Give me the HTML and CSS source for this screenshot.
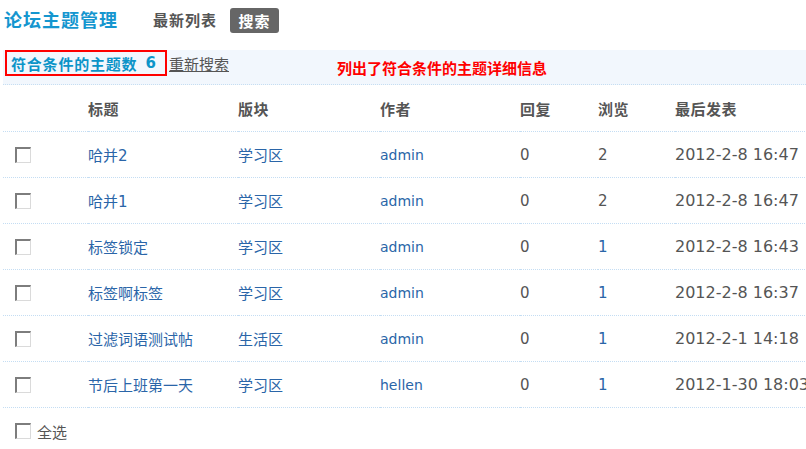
FILE: index.html
```html
<!DOCTYPE html>
<html lang="zh-CN">
<head>
<meta charset="utf-8">
<title>论坛主题管理</title>
<link rel="stylesheet" href="styles.css">
</head>
<body>
<div class="page">
  <div class="topbar">
    <h1 class="title">论坛主题管理</h1>
    <a class="tab">最新列表</a>
    <a class="tab tab-active">搜索</a>
  </div>
  <div class="infobar">
    <div class="count-box">符合条件的主题数 <span class="count-num">6</span></div>
    <a class="research">重新搜索</a>
    <span class="note">列出了符合条件的主题详细信息</span>
  </div>
  <table class="grid">
    <colgroup>
      <col class="c-check"><col class="c-title"><col class="c-board"><col class="c-author"><col class="c-reply"><col class="c-view"><col class="c-last">
    </colgroup>
    <thead>
      <tr><th></th><th>标题</th><th>版块</th><th>作者</th><th>回复</th><th>浏览</th><th>最后发表</th></tr>
    </thead>
    <tbody>
      <tr><td><span class="cb"></span></td><td class="link">哈并2</td><td class="link">学习区</td><td class="link author">admin</td><td class="num">0</td><td class="num">2</td><td class="date">2012-2-8 16:47</td></tr>
      <tr><td><span class="cb"></span></td><td class="link">哈并1</td><td class="link">学习区</td><td class="link author">admin</td><td class="num">0</td><td class="num">2</td><td class="date">2012-2-8 16:47</td></tr>
      <tr><td><span class="cb"></span></td><td class="link">标签锁定</td><td class="link">学习区</td><td class="link author">admin</td><td class="num">0</td><td class="num link">1</td><td class="date">2012-2-8 16:43</td></tr>
      <tr><td><span class="cb"></span></td><td class="link">标签啊标签</td><td class="link">学习区</td><td class="link author">admin</td><td class="num">0</td><td class="num link">1</td><td class="date">2012-2-8 16:37</td></tr>
      <tr><td><span class="cb"></span></td><td class="link">过滤词语测试帖</td><td class="link">生活区</td><td class="link author">admin</td><td class="num">0</td><td class="num link">1</td><td class="date">2012-2-1 14:18</td></tr>
      <tr><td><span class="cb"></span></td><td class="link">节后上班第一天</td><td class="link">学习区</td><td class="link author">hellen</td><td class="num">0</td><td class="num link">1</td><td class="date">2012-1-30 18:03</td></tr>
    </tbody>
  </table>
  <div class="footer">
    <span class="cb"></span><span class="select-all">全选</span>
  </div>
</div>
</body>
</html>
```

FILE: styles.css
```css
html, body {
  margin: 0;
  padding: 0;
  overflow: hidden;
  background: #fff;
}
body {
  font-family: "DejaVu Sans", "Noto Sans CJK SC", sans-serif;
  color: #555;
}
.page {
  width: 806px;
  height: 449px;
  overflow: hidden;
}
.topbar {
  display: flex;
  align-items: center;
  height: 40px;
  padding-left: 4px;
  margin-bottom: 10px;
}
.title {
  margin: 0 35px 0 0;
  font-family: "Noto Sans CJK SC", sans-serif;
  font-size: 18px;
  font-weight: bold;
  letter-spacing: 1px;
  color: #1596cf;
  line-height: 1;
  position: relative;
  top: -1px;
}
.tab {
  font-family: "Noto Sans CJK SC", sans-serif;
  font-size: 15px;
  font-weight: bold;
  letter-spacing: 1px;
  color: #555;
  line-height: 1;
  position: relative;
  top: -1px;
}
.tab-active {
  margin-left: 13px;
  background: #666;
  color: #fff;
  border-radius: 3px;
  height: 25px;
  width: 49px;
  display: flex;
  align-items: center;
  justify-content: center;
  box-sizing: border-box;
  top: 0;
}
.infobar {
  margin-left: 3px;
  height: 34px;
  background: #f2f7fd;
  border-bottom: 1px dotted #c6def2;
  display: flex;
  align-items: flex-start;
  font-family: "Noto Sans CJK SC", sans-serif;
}
.count-box {
  margin-left: 2px;
  height: 26px;
  box-sizing: border-box;
  width: 162px;
  border: 2px solid #f00;
  padding-left: 4px;
  display: flex;
  align-items: center;
  font-size: 15px;
  font-weight: bold;
  letter-spacing: 0.8px;
  color: #0c94c8;
  white-space: pre;
}
.count-num {
  font-family: "DejaVu Sans", sans-serif;
  margin-left: 4px;
}
.research {
  margin-left: 2px;
  height: 26px;
  display: flex;
  align-items: center;
  font-size: 15px;
  color: #555;
  text-decoration: underline;
}
.note {
  margin-left: 108px;
  margin-top: 7px;
  font-size: 15px;
  font-weight: bold;
  color: #f00;
}
.grid {
  margin-left: 3px;
  border-collapse: collapse;
  table-layout: fixed;
  width: 850px;
}
.c-check { width: 85px; }
.c-title { width: 150px; }
.c-board { width: 142px; }
.c-author { width: 140px; }
.c-reply { width: 78px; }
.c-view { width: 77px; }
.c-last { width: 178px; }
.grid th, .grid td {
  height: 45px;
  padding: 0;
  text-align: left;
  vertical-align: middle;
  border-bottom: 1px dotted #c4ddf3;
  white-space: nowrap;
}
.grid th {
  font-size: 15px;
  font-weight: bold;
  color: #555;
  letter-spacing: 0.5px;
  padding-top: 1px;
}
.grid td {
  font-size: 15px;
}
.grid td:first-child {
  padding-left: 12px;
}
.cb {
  display: inline-block;
  width: 13px;
  height: 13px;
  background: #fff;
  border-top: 2px solid #7d7d7d;
  border-left: 2px solid #7d7d7d;
  border-right: 1px solid #dadada;
  border-bottom: 1px solid #dadada;
  vertical-align: middle;
}
.link {
  color: #2a65a8;
}
.author {
  font-size: 14px !important;
}
.num {
  color: #555;
}
.num.link {
  color: #2a65a8;
}
.date {
  color: #555;
  font-size: 16px !important;
}
.footer {
  display: flex;
  align-items: center;
  height: 46px;
  padding-left: 15px;
}
.select-all {
  margin-left: 6px;
  font-family: "Noto Sans CJK SC", sans-serif;
  font-size: 15px;
  color: #555;
}
```
